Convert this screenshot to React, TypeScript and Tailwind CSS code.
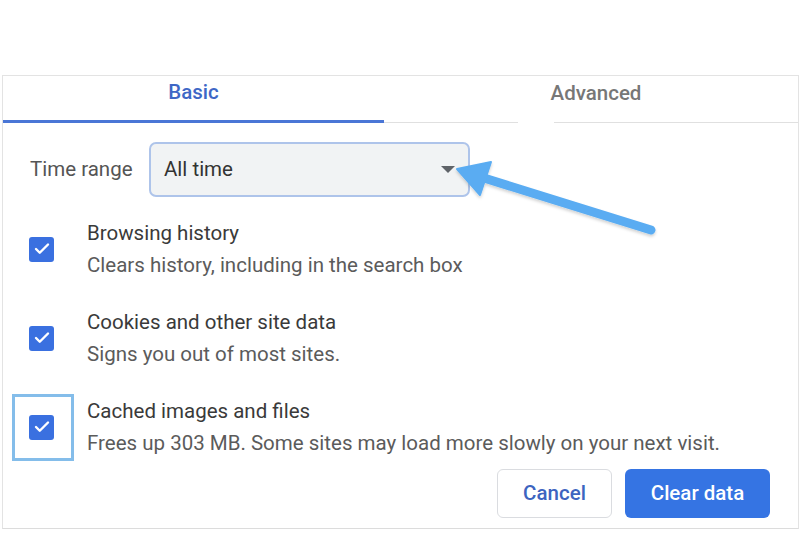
import { Check } from "lucide-react";

function Checkbox({ highlight }: { highlight?: boolean }) {
  return (
    <div className="relative shrink-0">
      {highlight && (
        <span className="absolute left-[-17px] top-[-21px] w-[62px] h-[67px] border-[3px] border-[#84bdea]" />
      )}
      <div className="w-[25px] h-[25px] rounded-[3px] bg-[#3a70e0] flex items-center justify-center">
        <Check size={18} strokeWidth={3.2} className="text-white" />
      </div>
    </div>
  );
}

function Item({ title, desc, highlight }: { title: string; desc: string; highlight?: boolean }) {
  return (
    <div className="flex items-center">
      <div className="ml-[26px] w-[58px]">
        <Checkbox highlight={highlight} />
      </div>
      <div className="text-[20.5px]">
        <div className="leading-[32px] text-[#3a3a3a]">{title}</div>
        <div className="leading-[32px] text-[#5b5b5b]">{desc}</div>
      </div>
    </div>
  );
}

export default function App() {
  return (
    <div className="relative w-[800px] h-[550px] bg-white overflow-hidden" style={{ fontFamily: "Roboto, 'Liberation Sans', sans-serif" }}>
      <div className="ml-[2px] mt-[75px] w-[797px] border border-[#e3e3e3] border-b-[#dcdcdc]">
        <div className="flex">
          <div className="w-[381px] h-[47px] pb-[12px] border-b-[3px] border-[#4a76d6] flex items-center justify-center text-[20.5px] font-medium text-[#3e67c6]">
            Basic
          </div>
          <div className="flex-1 h-[47px] pb-[12px] relative flex items-center justify-center text-[20.5px] font-medium text-[#777777]">
            <span className="ml-[10px]">Advanced</span>
            <div className="absolute left-0 bottom-0 w-[134px] h-px bg-[#e0e0e0]" />
            <div className="absolute left-[170px] right-0 bottom-0 h-px bg-[#e0e0e0]" />
          </div>
        </div>

        <div className="flex items-center mt-[19px]">
          <span className="ml-[27px] w-[119px] text-[20.5px] text-[#555555]">Time range</span>
          <div className="w-[321px] h-[55px] rounded-[7px] border-2 border-[#aec4ea] bg-[#f1f3f4] flex items-center justify-between pl-[13px] pr-[13px]">
            <span className="text-[20.5px] text-[#333333]">All time</span>
            <svg width="14" height="7" viewBox="0 0 14 7">
              <polygon points="0,0 14,0 7,7" fill="#5f6368" />
            </svg>
          </div>
        </div>

        <div className="flex flex-col gap-[25px] mt-[20px]">
          <Item title="Browsing history" desc="Clears history, including in the search box" />
          <Item title="Cookies and other site data" desc="Signs you out of most sites." />
          <Item
            title="Cached images and files"
            desc="Frees up 303 MB. Some sites may load more slowly on your next visit."
            highlight
          />
        </div>

        <div className="flex justify-end gap-[13px] mt-[10px] mb-[10px] mr-[28px]">
          <button className="w-[115px] h-[49px] rounded-[6px] border border-[#dadce0] bg-white text-[20.5px] font-medium text-[#3d64c0]">
            Cancel
          </button>
          <button className="w-[145px] h-[49px] rounded-[6px] bg-[#3574e3] text-[20.5px] font-medium text-white">
            Clear data
          </button>
        </div>
      </div>

      <svg className="absolute top-0 left-0 pointer-events-none" width="800" height="550" viewBox="0 0 800 550">
        <defs>
          <filter id="sh" x="-10%" y="-10%" width="120%" height="130%">
            <feDropShadow dx="0" dy="2" stdDeviation="1.5" floodColor="#000" floodOpacity="0.18" />
          </filter>
        </defs>
        <g filter="url(#sh)">
          <line x1="651" y1="230" x2="484" y2="178" stroke="#5aacf2" strokeWidth="9" strokeLinecap="round" />
          <polygon points="457,169 491,162 480,195" fill="#5aacf2" stroke="#5aacf2" strokeWidth="2" strokeLinejoin="round" />
        </g>
      </svg>
    </div>
  );
}
